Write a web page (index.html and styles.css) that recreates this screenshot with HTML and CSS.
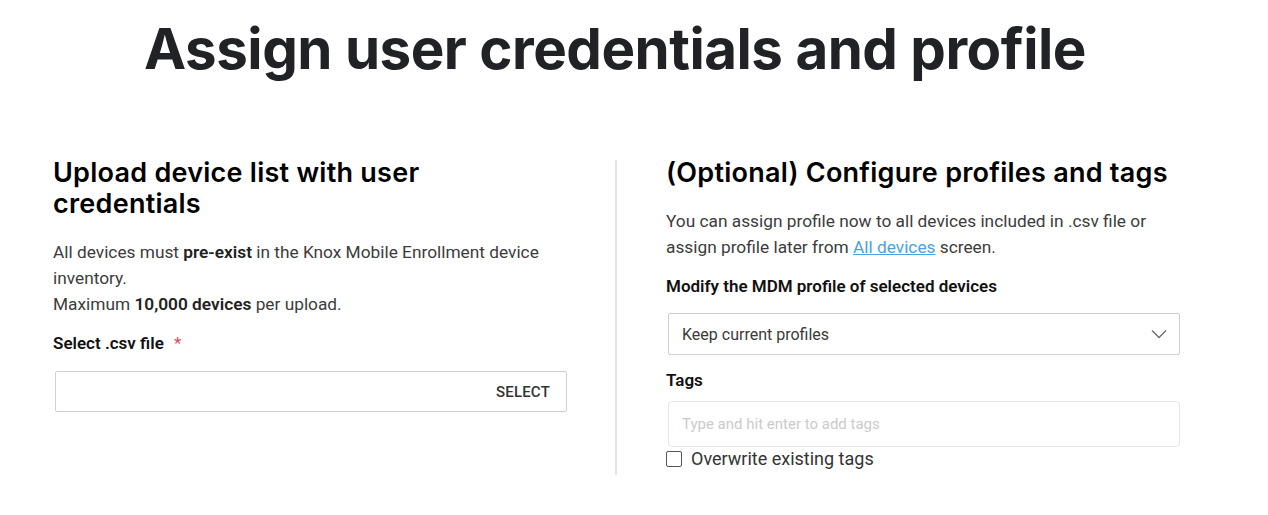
FILE: index.html
```html
<!DOCTYPE html>
<html lang="en">
<head>
  <meta charset="UTF-8" />
  <title>Assign user credentials and profile</title>
  <link rel="stylesheet" href="styles.css">
</head>
<body>
  <div class="page">
    <h1>Assign user credentials and profile</h1>

    <div class="columns">
      <section class="col">
        <h3>Upload device list with user credentials</h3>
        <p class="desc">
          All devices must <b>pre-exist</b> in the Knox Mobile Enrollment device inventory.<br>
          Maximum <b>10,000 devices</b> per upload.
        </p>
        <label class="field-label">Select .csv file <span class="req">*</span></label>
        <div class="file-box">
          <span class="select-btn">SELECT</span>
        </div>
      </section>

      <div class="divider"></div>

      <section class="col">
        <h3>(Optional) Configure profiles and tags</h3>
        <p class="desc">
          You can assign profile now to all devices included in .csv file or
          assign profile later from <a href="#">All devices</a> screen.
        </p>
        <label class="field-label">Modify the MDM profile of selected devices</label>
        <div class="dropdown">
          <span>Keep current profiles</span>
          <svg width="16" height="10" viewBox="0 0 16 10">
            <path d="M1 1.5 L8 8.5 L15 1.5" fill="none" stroke="#6b6b6b" stroke-width="1.3"/>
          </svg>
        </div>
        <label class="field-label tags-label">Tags</label>
        <input class="tags-input" type="text" placeholder="Type and hit enter to add tags">
        <label class="check">
          <span class="box"></span>
          Overwrite existing tags
        </label>
      </section>
    </div>
  </div>
</body>
</html>
```

FILE: styles.css
```css
html, body {
  margin: 0;
  padding: 0;
  background-color: #ffffff;
  font-family: Roboto, 'Noto Sans', sans-serif;
  color: #222;
}

.page {
  width: 1230px;
  box-sizing: border-box;
}

h1 {
  font-family: Inter, 'Open Sans', sans-serif;
  font-size: 56.5px;
  font-weight: 700;
  letter-spacing: -0.5px;
  color: #202226;
  text-align: center;
  margin: 0;
  padding-top: 14px;
  line-height: 70px;
}

.columns {
  display: grid;
  grid-template-columns: 514px 1px 514px;
  column-gap: 49px;
  padding-left: 53px;
  margin-top: 76px;
}

.divider {
  background-color: #e3e3e3;
  height: 315px;
  margin-left: -1px;
}

h3 {
  font-family: Inter, 'Open Sans', sans-serif;
  font-size: 27px;
  font-weight: 600;
  letter-spacing: 0.25px;
  color: #000;
  line-height: 31px;
  margin: -3px 0 0;
}

.desc {
  font-size: 17.3px;
  line-height: 26px;
  color: #3c3c3c;
  margin: 20px 0 0;
}

.desc b {
  font-weight: 600;
  color: #222;
}

.desc a {
  color: #4aa3df;
  text-decoration: underline;
}

.field-label {
  display: block;
  font-size: 17px;
  font-weight: 600;
  color: #111;
  margin-top: 14px;
  line-height: 24px;
}

.req {
  color: #e24a5a;
  font-weight: 400;
  margin-left: 6px;
}

.file-box {
  margin: 16px 0 0 2px;
  height: 41px;
  border: 1px solid #cfcfcf;
  border-radius: 2px;
  box-sizing: border-box;
  display: flex;
  align-items: center;
  justify-content: flex-end;
  padding-right: 16px;
}

.select-btn {
  font-size: 15px;
  font-weight: 500;
  color: #333;
  letter-spacing: 0.2px;
}

.dropdown {
  margin: 15px 0 0 2px;
  height: 42px;
  border: 1px solid #cfcfcf;
  border-radius: 2px;
  box-sizing: border-box;
  display: flex;
  align-items: center;
  justify-content: space-between;
  padding: 0 12px 0 13px;
  font-size: 16px;
  color: #3a3a3a;
}

.tags-label {
  margin-top: 13px;
}

.tags-input {
  display: block;
  width: 512px;
  margin: 9px 0 0 2px;
  height: 46px;
  border: 1px solid #e6e6e6;
  border-radius: 4px;
  box-sizing: border-box;
  padding: 0 13px;
  font-family: Roboto, 'Noto Sans', sans-serif;
  font-size: 15px;
  outline: none;
}

.tags-input::placeholder {
  color: #cbcbcb;
}

.check {
  display: flex;
  align-items: center;
  gap: 9px;
  font-size: 18px;
  color: #333;
  margin-top: 1px;
}

.box {
  width: 14px;
  height: 14px;
  border: 1px solid #555;
  border-radius: 2px;
}
```
